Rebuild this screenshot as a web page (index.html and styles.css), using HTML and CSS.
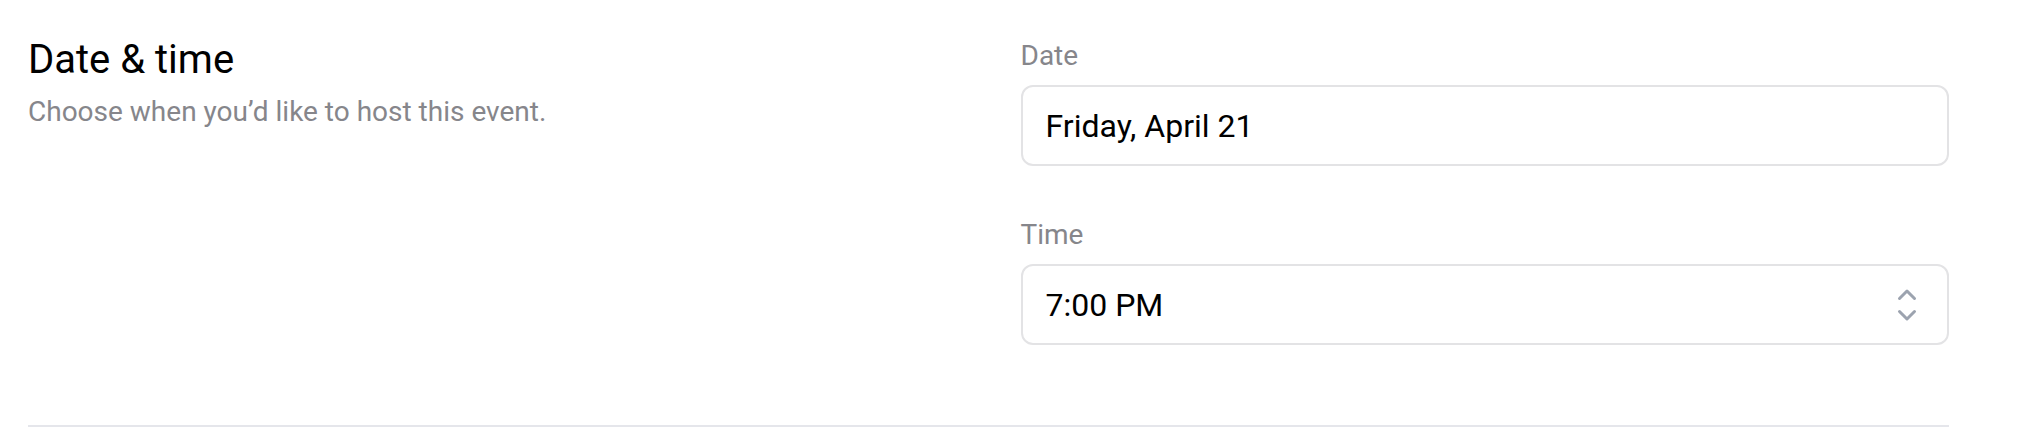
FILE: index.html
```html
<!DOCTYPE html>
<html lang="en">
<head>
<meta charset="utf-8">
<title>Date &amp; time</title>
<link rel="stylesheet" href="styles.css">
</head>
<body>
<div class="page">
  <section class="section">
    <div class="intro">
      <h2 class="title">Date &amp; time</h2>
      <p class="subtitle">Choose when you’d like to host this event.</p>
    </div>
    <div class="fields">
      <div class="field">
        <label class="label">Date</label>
        <div class="input">Friday, April 21</div>
      </div>
      <div class="field">
        <label class="label">Time</label>
        <div class="input select">
          <span>7:00 PM</span>
          <svg class="chevrons" width="20" height="34" viewBox="0 0 20 34" fill="none" stroke="#9ca3af" stroke-width="3" stroke-linecap="round" stroke-linejoin="round">
            <polyline points="2.5,10.5 10,3 17.5,10.5"/>
            <polyline points="2.5,23.5 10,31 17.5,23.5"/>
          </svg>
        </div>
      </div>
    </div>
  </section>
</div>
</body>
</html>
```
FILE: styles.css
```css
* { box-sizing: border-box; }
html, body { margin: 0; background: #ffffff; }
body {
  font-family: Roboto, "Liberation Sans", Arial, sans-serif;
  color: #000;
}
.page {
  padding: 32px 79px 0 28px;
}
.section {
  display: grid;
  grid-template-columns: 1fr 1fr;
  column-gap: 64px;
  padding-bottom: 80px;
  border-bottom: 2px solid #e5e6eb;
}
.title {
  margin: 0;
  font-size: 40px;
  line-height: 56px;
  font-weight: 400;
  color: #000;
}
.subtitle {
  margin: 4px 0 0;
  font-size: 28px;
  line-height: 40px;
  color: #86868b;
}
.fields {
  display: flex;
  flex-direction: column;
  gap: 49px;
  padding-top: 4px;
}
.label {
  display: block;
  font-size: 28px;
  line-height: 40px;
  color: #86868b;
  margin-bottom: 9px;
}
.input {
  height: 81px;
  border: 2px solid #e3e3e5;
  border-radius: 12px;
  padding: 15px 20px 14px 23px;
  font-size: 32px;
  line-height: 48px;
  color: #000;
}
.select {
  display: flex;
  align-items: center;
  justify-content: space-between;
  padding-right: 30px;
}
.chevrons {
  display: block;
  flex: none;
}
```
